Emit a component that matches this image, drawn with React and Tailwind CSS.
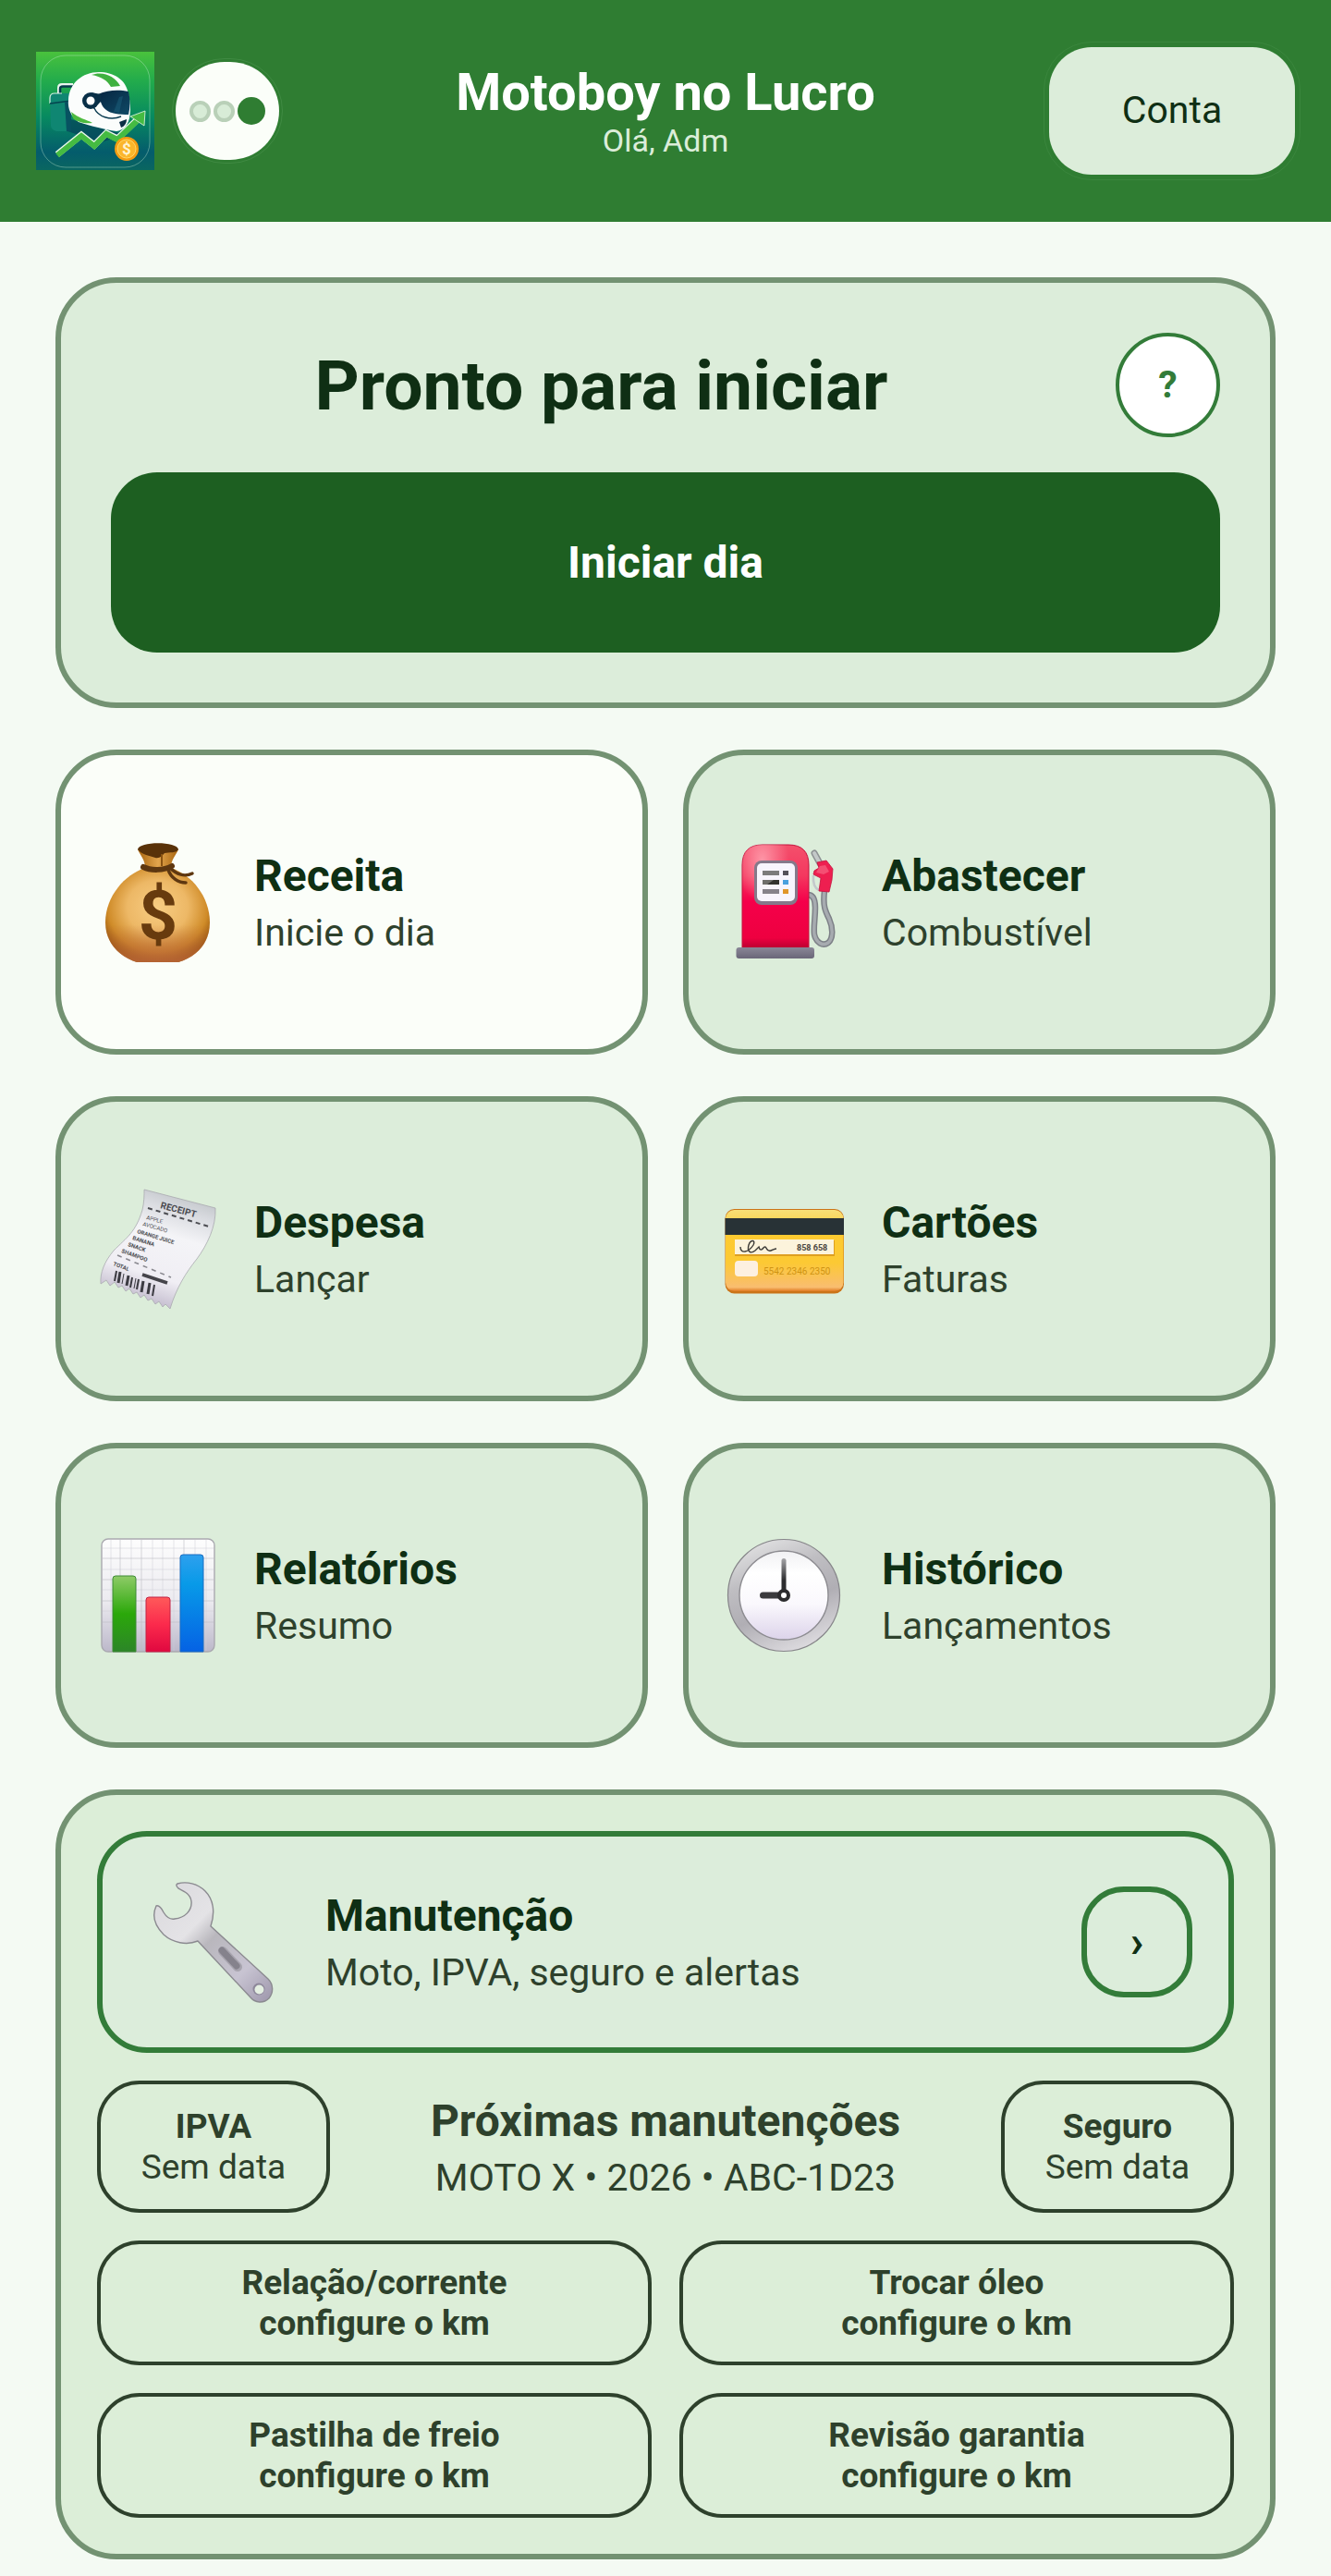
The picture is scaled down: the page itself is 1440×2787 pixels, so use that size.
import React from 'react';

const LogoIcon = () => (
    <svg viewBox="0 0 128 128" className="size-32 shrink-0" aria-hidden="true">
        <defs>
            <linearGradient id="logoBg" x1="0" y1="0" x2="0" y2="1">
                <stop offset="0" stopColor="#49c23c" />
                <stop offset="0.25" stopColor="#22ab4c" />
                <stop offset="0.55" stopColor="#078a60" />
                <stop offset="0.85" stopColor="#045c6c" />
                <stop offset="1" stopColor="#0a6660" />
            </linearGradient>
            <linearGradient id="logoVisor" x1="0" y1="0" x2="1" y2="1">
                <stop offset="0" stopColor="#062440" />
                <stop offset="1" stopColor="#0f4a66" />
            </linearGradient>
        </defs>
        <rect width="128" height="128" fill="url(#logoBg)" />
        <rect x="5" y="4" width="118" height="121" rx="27" fill="none" stroke="#c9ecd2" strokeWidth="0.7" opacity="0.55" />
        <path d="M34 72 L96 90 L70 98 L34 86 Z" fill="#06405a" opacity="0.7" />
        <path d="M25 46 V39 Q25 36 28 36 H40" fill="none" stroke="#e8f5ee" strokeWidth="4" />
        <path d="M26 46 V40 Q26 37.500 29 37.500 H40" fill="none" stroke="#063b4c" strokeWidth="2.5" />
        <path d="M15 50 Q15 45 20 45 H38 V86 H22 Q16 84 16 80 Z" fill="#0f8672" />
        <path d="M15 56 V50 Q15 45 20 45 H28" fill="none" stroke="#d5f0e2" strokeWidth="1.2" />
        <path d="M15 56 L38 53" stroke="#04434f" strokeWidth="1.6" />
        <path d="M31 54 H38 V86 H33 Z" fill="#075261" />
        <path d="M35 52 C36 34 50 22 68 22 C84 22 96 30 99 42 C102 54 103 62 101 72 C99 80 94 85 87 86 C74 84 58 80 46 76 C38 70 34 62 35 52 Z" fill="#fbfdfc" />
        <path d="M64 24 C76 22 86 28 91 37 L81 38 C77 31 71 27 60 25 Z" fill="#3fb13f" />
        <path d="M38 65 C46 72 54 73 61 77 C53 78 44 76 40 72 Z" fill="#4dbb3f" />
        <path d="M67 46 C78 41 90 41 100 43 C102 51 102 60 100 68 C91 68 80 67 76 63 C70 59 70 52 67 46 Z" fill="url(#logoVisor)" />
        <path d="M84 65 L90 49 L94 48 L90 66 Z" fill="#1b5f7c" opacity="0.5" />
        <path d="M60 44 L70 46 L70 54 L62 62 Z" fill="#092f47" />
        <circle cx="59" cy="53" r="9" fill="#092f47" />
        <path d="M63 61 C67 70 80 75 92 70" fill="none" stroke="#0a3b50" strokeWidth="1.4" />
        <path d="M90 76 L98 73 C98 78 95 81 92 82 Z" fill="#0b2e45" />
        <circle cx="59" cy="53" r="4.5" fill="#fff" />
        <path d="M23 111 L49 90 L63 101 L76 88 L88 94 L111 72" fill="none" stroke="#eaf9ea" strokeWidth="7" />
        <path d="M23 112 L49 91 L63 102 L76 89 L88 95 L111 73" fill="none" stroke="#45bb42" strokeWidth="6" />
        <path d="M102 70 L118 64 L117 80 Z" fill="#45bb42" stroke="#eaf9ea" strokeWidth="0.8" />
        <circle cx="98" cy="105" r="13" fill="#f59d12" />
        <circle cx="98" cy="105" r="10" fill="#fbb62b" stroke="#ffd766" strokeWidth="1" />
        <text x="98" y="111" textAnchor="middle" fontSize="17" fontWeight="700" fill="#fff4cf">$</text>
    </svg>
);

const MoneyBagIcon = () => (
    <svg viewBox="0 0 132 132" className="size-[132px] shrink-0" aria-hidden="true">
        <defs>
            <radialGradient id="bagFill" cx="0.5" cy="0.42" r="0.58">
                <stop offset="0" stopColor="#f8cd83" />
                <stop offset="0.5" stopColor="#edb866" />
                <stop offset="0.82" stopColor="#d08c29" />
                <stop offset="1" stopColor="#9c5a0c" />
            </radialGradient>
            <linearGradient id="bagShade" x1="0" y1="0" x2="0" y2="1">
                <stop offset="0.6" stopColor="#b9653a" stopOpacity="0" />
                <stop offset="1" stopColor="#b9653a" stopOpacity="0.85" />
            </linearGradient>
            <linearGradient id="bagNeck" x1="0" y1="0" x2="1" y2="0">
                <stop offset="0" stopColor="#a8650f" />
                <stop offset="0.5" stopColor="#e3a54d" />
                <stop offset="1" stopColor="#a8650f" />
            </linearGradient>
        </defs>
        <path d="M52 29 C30 36 9 60 9 88 C9 110 24 125 43 131 H88 C108 125 122 110 122 88 C122 60 102 36 80 29 Z" fill="url(#bagFill)" />
        <path d="M52 29 C30 36 9 60 9 88 C9 110 24 125 43 131 H88 C108 125 122 110 122 88 C122 60 102 36 80 29 Z" fill="url(#bagShade)" />
        <path d="M44 9 C47 16 52 20 52 29 H80 C80 20 85 16 88 9 Z" fill="url(#bagNeck)" />
        <path d="M44 9 C45 0 87 0 88 9 C86 13 78 12 73 13 C70 16 68 19 63 18 C57 16 49 15 44 9 Z" fill="#593209" />
        <path d="M70 14 V27" stroke="#8a5311" strokeWidth="2" />
        <path d="M50 28 C58 32 72 32 81 27" fill="none" stroke="#5e3710" strokeWidth="6" strokeLinecap="round" />
        <path d="M79 29 C86 36 95 39 103 35" fill="none" stroke="#5e3710" strokeWidth="3.5" strokeLinecap="round" />
        <path d="M77 31 C80 40 88 45 96 45" fill="none" stroke="#5e3710" strokeWidth="3.5" strokeLinecap="round" />
        <text x="66" y="106" textAnchor="middle" fontSize="74" fontWeight="700" fill="#683b0e">$</text>
    </svg>
);

const FuelIcon = () => (
    <svg viewBox="0 0 132 132" className="size-[132px] shrink-0" aria-hidden="true">
        <defs>
            <linearGradient id="pumpRed" x1="0" y1="0" x2="0" y2="1">
                <stop offset="0" stopColor="#f4506c" />
                <stop offset="0.3" stopColor="#f4385f" />
                <stop offset="0.55" stopColor="#f5004a" />
                <stop offset="0.9" stopColor="#ee0040" />
                <stop offset="1" stopColor="#b9002f" />
            </linearGradient>
            <radialGradient id="pumpShine" cx="0.3" cy="0.15" r="0.4">
                <stop offset="0" stopColor="#ff9fae" stopOpacity="0.9" />
                <stop offset="1" stopColor="#ff9fae" stopOpacity="0" />
            </radialGradient>
            <linearGradient id="pumpBase" x1="0" y1="0" x2="0" y2="1">
                <stop offset="0" stopColor="#8a8797" />
                <stop offset="1" stopColor="#6a6678" />
            </linearGradient>
        </defs>
        <path d="M90 58 C96 58 98 63 98 72 C98 84 96 92 97 101 C99 110 106 114 112 110 C118 105 117 93 113 84 C109 76 106 70 108 54" fill="none" stroke="#7d8087" strokeWidth="6.5" />
        <path d="M90 58 C96 58 98 63 98 72 C98 84 96 92 97 101 C99 110 106 114 112 110 C118 105 117 93 113 84 C109 76 106 70 108 54" fill="none" stroke="#a7abb0" strokeWidth="3.5" />
        <path d="M19 116 V26 Q19 4 41 4 H69 Q91 4 91 26 V116 Z" fill="url(#pumpRed)" stroke="#c4103c" strokeWidth="1" />
        <path d="M19 116 V26 Q19 4 41 4 H69 Q91 4 91 26 V116 Z" fill="url(#pumpShine)" />
        <rect x="12.5" y="115" width="84.5" height="12" rx="3" fill="url(#pumpBase)" />
        <rect x="32" y="21" width="47" height="48" rx="8" fill="#85798a" />
        <rect x="35" y="24" width="41" height="41" rx="5" fill="#f8f5fd" />
        <rect x="41" y="32" width="18" height="5" fill="#7c7c7c" />
        <rect x="41" y="42" width="18" height="5" fill="#6f6f6c" />
        <path d="M46 47 L53 42 H59 V47 Z" fill="#33332f" />
        <rect x="41" y="52" width="18" height="5" fill="#86838a" />
        <rect x="63" y="32" width="6" height="5" fill="#55525a" />
        <rect x="63" y="42" width="6" height="5" fill="#4aa0de" />
        <rect x="63" y="52" width="6" height="5" fill="#e0962a" />
        <path d="M97 13 L103 24" stroke="#8d9193" strokeWidth="7" strokeLinecap="round" />
        <path d="M97 13 L103 24" stroke="#c3c8c8" strokeWidth="4" strokeLinecap="round" />
        <path d="M96 37 Q95 50 102 53" fill="none" stroke="#c3c8cb" strokeWidth="2.5" />
        <path d="M100 23 L110 21 L117 30 L116 42 L113 55 L102 54 L104 40 L96 36 L97 32 L102 29 Z" fill="#ee1f50" stroke="#c4103c" strokeWidth="0.8" />
        <path d="M103 27 L109 26 L113 33 L107 36 L99 34 Z" fill="#f8708a" opacity="0.6" />
    </svg>
);

const ReceiptIcon = () => (
    <svg viewBox="0 0 132 132" className="size-[132px] shrink-0" aria-hidden="true">
        <defs>
            <linearGradient id="paper" x1="0.6" y1="0" x2="0.3" y2="1">
                <stop offset="0" stopColor="#c2c6ca" />
                <stop offset="0.14" stopColor="#d9dbe0" />
                <stop offset="0.35" stopColor="#f4f4f7" />
                <stop offset="0.7" stopColor="#f0eef4" />
                <stop offset="1" stopColor="#b5acc2" />
            </linearGradient>
        </defs>
        <path d="M51 2 L128 22 C129 42 119 62 108 77 C96 92 86 108 79 131 L74 126 L71 129 L67 123 L63 126 L59 120 L55 122 L51 116 L47 119 L43 113 L39 115 L35 109 L31 112 L27 106 L23 108 L19 102 L14 106 L10 100 L4 104 C3 92 8 80 18 68 C32 54 42 48 49 24 C51 16 51 8 51 2 Z" fill="url(#paper)" stroke="#a9a9b0" strokeWidth="0.8" />
        <path d="M55 22 L121 42" stroke="#4c4d52" strokeWidth="2" strokeDasharray="5 4" />
        <path d="M22 73 L80 97" stroke="#8a8990" strokeWidth="1.6" strokeDasharray="5 5" />
        <path d="M49 94 L76 103" stroke="#45444a" strokeWidth="3.5" />
        <g fontWeight="700" fill="#4a4b50">
            <text x="68" y="22" transform="rotate(15 68 22)" fontSize="10">RECEIPT</text>
            <text x="53" y="34" transform="rotate(15 53 34)" fontSize="6" fontWeight="400">APPLE</text>
            <text x="49" y="41" transform="rotate(16 49 41)" fontSize="6" fontWeight="400">AVOCADO</text>
            <text x="43" y="49" transform="rotate(17 43 49)" fontSize="6">ORANGE JUICE</text>
            <text x="38" y="56" transform="rotate(18 38 56)" fontSize="6">BANANA</text>
            <text x="33" y="63" transform="rotate(19 33 63)" fontSize="6">SNACK</text>
            <text x="26" y="70" transform="rotate(20 26 70)" fontSize="6">SHAMPOO</text>
            <text x="17" y="84" transform="rotate(20 17 84)" fontSize="6">TOTAL</text>
        </g>
        <g stroke="#3c3b42">
            <path d="M21 90 L19 101" strokeWidth="2" />
            <path d="M25 91 L23 103" strokeWidth="3" />
            <path d="M29 93 L27 104" strokeWidth="1" />
            <path d="M34 95 L32 106" strokeWidth="3" />
            <path d="M38 97 L36 108" strokeWidth="2" />
            <path d="M42 98 L40 109" strokeWidth="1" />
            <path d="M45 99 L43 110" strokeWidth="2" />
            <path d="M50 101 L48 113" strokeWidth="3" />
            <path d="M57 103 L55 115" strokeWidth="3" />
            <path d="M62 105 L60 117" strokeWidth="2" />
        </g>
    </svg>
);

const CardIcon = () => (
    <svg viewBox="0 0 132 132" className="size-[132px] shrink-0" aria-hidden="true">
        <defs>
            <linearGradient id="cardFill" x1="0" y1="0" x2="0" y2="1">
                <stop offset="0" stopColor="#f8df78" />
                <stop offset="0.3" stopColor="#fdca30" />
                <stop offset="0.65" stopColor="#fcc934" />
                <stop offset="0.95" stopColor="#f9bd70" />
                <stop offset="1" stopColor="#e07a22" />
            </linearGradient>
        </defs>
        <rect x="0.5" y="23" width="128.5" height="91.5" rx="10" fill="#cb7418" />
        <rect x="1" y="24" width="127.5" height="88" rx="9.5" fill="url(#cardFill)" />
        <rect x="0.5" y="33" width="128.5" height="18" fill="#283236" />
        <rect x="11" y="57" width="108" height="17" fill="#c98315" opacity="0.6" />
        <rect x="11" y="56" width="107" height="16" fill="#fcf3dc" />
        <path d="M17 64 C17 72 26 70 31 62 C34 56 28 56 26 62 C24 69 28 72 33 68 L37 64 C38 68 40 68 42 65 C46 61 44 70 50 68 C53 67 54 66 56 66" fill="none" stroke="#3c3a36" strokeWidth="1.4" />
        <text x="78" y="68" fontSize="9" fontWeight="700" fill="#4b4742">858 658</text>
        <rect x="11" y="79" width="25" height="17" rx="4" fill="#fdf0e0" />
        <text x="42" y="94" fontSize="10" fill="#cf9413">5542 2346 2350</text>
    </svg>
);

const ChartIcon = () => (
    <svg viewBox="0 0 132 132" className="size-[132px] shrink-0" aria-hidden="true">
        <defs>
            <linearGradient id="chartBg" x1="0" y1="0" x2="0" y2="1">
                <stop offset="0" stopColor="#fdfdfd" />
                <stop offset="0.55" stopColor="#ecebf0" />
                <stop offset="1" stopColor="#bcb8ca" />
            </linearGradient>
            <linearGradient id="barGreen" x1="0" y1="0" x2="0" y2="1">
                <stop offset="0" stopColor="#8fcb68" />
                <stop offset="0.5" stopColor="#2ba80a" />
                <stop offset="1" stopColor="#2c8528" />
            </linearGradient>
            <linearGradient id="barRed" x1="0" y1="0" x2="0" y2="1">
                <stop offset="0" stopColor="#ff5a5a" />
                <stop offset="0.5" stopColor="#fb2a4c" />
                <stop offset="1" stopColor="#e00840" />
            </linearGradient>
            <linearGradient id="barBlue" x1="0" y1="0" x2="0" y2="1">
                <stop offset="0" stopColor="#2ea0ee" />
                <stop offset="0.3" stopColor="#089ae8" />
                <stop offset="1" stopColor="#0562e4" />
            </linearGradient>
        </defs>
        <rect x="5" y="5" width="122" height="122" rx="7" fill="url(#chartBg)" stroke="#aaa9b0" strokeWidth="1.4" />
        <path d="M15 6 V126 M37 6 V126 M60 6 V126 M71 6 V126 M83 6 V126 M106 6 V126 M118 6 V126 M6 15 H126 M6 38 H126 M6 60 H126 M6 83 H126" stroke="#cfcfd4" strokeWidth="0.5" />
        <path d="M25 6 V126 M48 6 V126 M94 6 V126 M6 26 H126 M6 49 H126 M6 72 H126 M6 95 H126" stroke="#bcbcc2" strokeWidth="0.6" />
        <path d="M17 127 V48 Q17 45 20 45 H39 Q42 45 42 48 V127 Z" fill="url(#barGreen)" stroke="#3d8a35" strokeWidth="1" />
        <path d="M53 127 V71 Q53 68 56 68 H76 Q79 68 79 71 V127 Z" fill="url(#barRed)" stroke="#c22244" strokeWidth="1" />
        <path d="M90 127 V25 Q90 22 93 22 H112 Q115 22 115 25 V127 Z" fill="url(#barBlue)" stroke="#1a6cc0" strokeWidth="1" />
    </svg>
);

const ClockIcon = () => (
    <svg viewBox="0 0 132 132" className="size-[132px] shrink-0" aria-hidden="true">
        <defs>
            <linearGradient id="clockRim" x1="0.3" y1="0" x2="0.7" y2="1">
                <stop offset="0" stopColor="#e0e0e1" />
                <stop offset="0.3" stopColor="#bfbec2" />
                <stop offset="0.6" stopColor="#b0aeb4" />
                <stop offset="1" stopColor="#e0dee2" />
            </linearGradient>
            <linearGradient id="clockFace" x1="0" y1="0" x2="0" y2="1">
                <stop offset="0" stopColor="#f1f1f3" />
                <stop offset="0.25" stopColor="#ffffff" />
                <stop offset="0.6" stopColor="#faf8fd" />
                <stop offset="1" stopColor="#dcd3ea" />
            </linearGradient>
            <linearGradient id="clockHand" x1="0" y1="0" x2="0" y2="1">
                <stop offset="0" stopColor="#a5a5a8" />
                <stop offset="0.6" stopColor="#2c2c2e" />
            </linearGradient>
        </defs>
        <circle cx="64" cy="66" r="60.5" fill="url(#clockRim)" stroke="#868589" strokeWidth="1.2" />
        <circle cx="64" cy="66" r="48" fill="url(#clockFace)" stroke="#8d8c91" strokeWidth="1.4" />
        <rect x="61.5" y="26" width="5" height="40" rx="2.5" fill="url(#clockHand)" />
        <rect x="38" y="62.5" width="26" height="7" rx="3.5" fill="#3b3b3d" />
        <circle cx="64" cy="66" r="7" fill="#2c2c2e" />
        <circle cx="64" cy="66" r="3" fill="#fff" />
    </svg>
);

const WrenchIcon = () => (
    <svg viewBox="0 0 132 132" className="size-[132px] shrink-0" aria-hidden="true">
        <defs>
            <linearGradient id="steel" x1="0" y1="0" x2="1" y2="1">
                <stop offset="0" stopColor="#d9d8dc" />
                <stop offset="0.35" stopColor="#e4e3e6" />
                <stop offset="0.48" stopColor="#b9b7bd" />
                <stop offset="0.75" stopColor="#c8c4d2" />
                <stop offset="1" stopColor="#9d96ab" />
            </linearGradient>
        </defs>
        <path d="M28 3 C38 0 50 3 58 11 C67 20 69 34 64 49 L126 106 C132 112 132 121 127 127 C121 133 112 132 107 126 L50 65 C38 70 23 67 13 58 C4 49 0 38 5 27 C8 26 11 30 13 34 C16 39 20 42 25 41 C36 40 44 32 43 22 C42 14 35 11 29 8 C27 6 26 4 28 3 Z" fill="url(#steel)" stroke="#8b8a90" strokeWidth="1.4" strokeLinejoin="round" />
        <path d="M77 76 L93 93" stroke="#a7a4ae" strokeWidth="10" strokeLinecap="round" />
        <path d="M76 75 L92 92" stroke="#85828c" strokeWidth="7" strokeLinecap="round" />
        <circle cx="116" cy="117" r="6.5" fill="#8d879a" />
        <circle cx="116.5" cy="117.5" r="5" fill="#e4efe2" />
    </svg>
);

const menuItems = [
    { title: 'Receita', subtitle: 'Inicie o dia', Icon: MoneyBagIcon, highlight: true },
    { title: 'Abastecer', subtitle: 'Combustível', Icon: FuelIcon },
    { title: 'Despesa', subtitle: 'Lançar', Icon: ReceiptIcon },
    { title: 'Cartões', subtitle: 'Faturas', Icon: CardIcon },
    { title: 'Relatórios', subtitle: 'Resumo', Icon: ChartIcon },
    { title: 'Histórico', subtitle: 'Lançamentos', Icon: ClockIcon },
];

const services = ['Relação/corrente', 'Trocar óleo', 'Pastilha de freio', 'Revisão garantia'];

const Header = () => (
    <header className="grid h-60 grid-cols-[1fr_auto_1fr] items-center bg-[#2f7d32] px-[39px]">
        <div className="flex items-center gap-[23px]">
            <LogoIcon />
            <button
                type="button"
                aria-label="Alternar tema"
                className="flex h-[106px] w-28 items-center justify-center gap-[3px] rounded-[53px] bg-[#fbfef9] outline-1 outline-offset-[3px] outline-[#3f8a42]"
            >
                <span className="size-[23px] rounded-full border-4 border-[#b9d0b8] bg-[#d8ecd7]"></span>
                <span className="size-[23px] rounded-full border-4 border-[#b9d0b8] bg-[#d8ecd7]"></span>
                <span className="size-[30px] rounded-full bg-[#2f7d32]"></span>
            </button>
        </div>
        <div className="text-center">
            <h1 className="text-[56px] leading-[64px] font-bold text-white">Motoboy no Lucro</h1>
            <p className="text-[34px] leading-10 text-[#dcedda]">Olá, Adm</p>
        </div>
        <button
            type="button"
            className="h-[138px] w-[266px] justify-self-end rounded-[46px] bg-[#dcedda] text-[41px] text-[#0f2f14] outline-1 outline-offset-[5px] outline-[#3a863d]"
        >
            Conta
        </button>
    </header>
);

const MenuCard = ({ title, subtitle, Icon, highlight }) => (
    <button
        type="button"
        className={`flex h-[330px] items-center gap-[38px] rounded-[66px] border-6 border-[#739272] px-[39px] text-left ${highlight ? 'bg-[#fbfef9]' : 'bg-[#dcedda]'}`}
    >
        <Icon />
        <span>
            <span className="block text-[48px] leading-[66px] font-bold text-[#0f2f14]">{title}</span>
            <span className="block text-[41px] leading-[56px] text-[#2e412c]">{subtitle}</span>
        </span>
    </button>
);

const DueBadge = ({ label }) => (
    <button type="button" className="h-[143px] w-[252px] rounded-[46px] border-4 border-[#2e412c] text-[37px] leading-11">
        <span className="block font-bold">{label}</span>
        <span className="block">Sem data</span>
    </button>
);

const App = () => {
    return (
        <div className="min-h-screen bg-[#f4faf3] font-[Roboto,sans-serif]">
            <Header />
            <main className="flex flex-col gap-[45px] px-[60px] pt-[60px] pb-[18px]">
                <section className="rounded-[66px] border-6 border-[#739272] bg-[#dcedda] p-[54px]">
                    <div className="flex items-center gap-[26px]">
                        <h2 className="flex-1 text-center text-[75px] leading-[90px] font-bold text-[#0f2f14]">Pronto para iniciar</h2>
                        <button
                            type="button"
                            aria-label="Ajuda"
                            className="size-[113px] rounded-full border-4 border-[#337c39] bg-white text-[41px] font-bold text-[#337c39]"
                        >
                            ?
                        </button>
                    </div>
                    <button type="button" className="mt-[38px] h-[195px] w-full rounded-[50px] bg-[#1d5f21] text-[48px] font-bold text-white">
                        Iniciar dia
                    </button>
                </section>

                <section className="grid grid-cols-2 gap-x-[38px] gap-y-[45px]">
                    {menuItems.map(item => (
                        <MenuCard key={item.title} {...item} />
                    ))}
                </section>

                <section className="flex flex-col gap-[30px] rounded-[66px] border-6 border-[#739272] bg-[#dceed8] p-[39px] text-[#2e412c]">
                    <div className="flex h-60 items-center gap-[56px] rounded-[54px] border-6 border-[#337c39] bg-[#dceddb] pr-[39px] pl-[53px]">
                        <WrenchIcon />
                        <div className="flex-1">
                            <h2 className="text-[48px] leading-[66px] font-bold text-[#0f2f14]">Manutenção</h2>
                            <p className="text-[41px] leading-[56px]">Moto, IPVA, seguro e alertas</p>
                        </div>
                        <button
                            type="button"
                            aria-label="Abrir manutenção"
                            className="size-[120px] rounded-[46px] border-6 border-[#337c39] text-[48px] font-bold text-[#0f2f14]"
                        >
                            ›
                        </button>
                    </div>

                    <div className="flex items-center justify-between">
                        <DueBadge label="IPVA" />
                        <div className="text-center">
                            <h3 className="text-[48px] leading-[66px] font-bold">Próximas manutenções</h3>
                            <p className="text-[41px] leading-[56px]">MOTO X • 2026 • ABC-1D23</p>
                        </div>
                        <DueBadge label="Seguro" />
                    </div>

                    <div className="grid grid-cols-2 gap-[30px]">
                        {services.map(service => (
                            <button
                                key={service}
                                type="button"
                                className="h-[135px] rounded-[46px] border-4 border-[#2e412c] text-[37px] leading-11 font-bold"
                            >
                                <span className="block">{service}</span>
                                <span className="block">configure o km</span>
                            </button>
                        ))}
                    </div>
                </section>
            </main>
        </div>
    );
};
export default App;
